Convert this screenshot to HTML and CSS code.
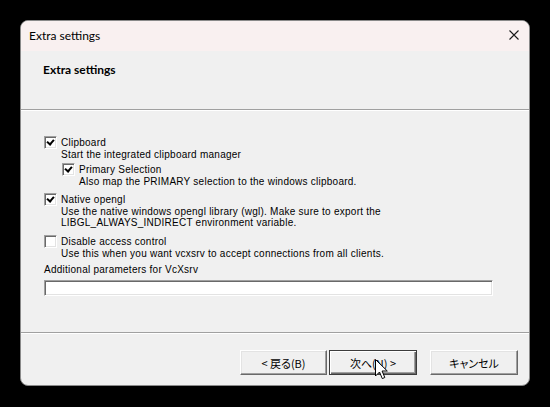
FILE: index.html
```html
<!DOCTYPE html>
<html lang="ja">
<head>
  <meta charset="UTF-8" />
  <title>Extra settings</title>
  <link rel="stylesheet" href="styles.css">
</head>
<body>
  <div class="dialog">
    <div class="titlebar">
      <span class="title">Extra settings</span>
      <svg class="close" width="10" height="10" viewBox="0 0 10 10">
        <path d="M0.5 0.5 L9.5 9.5 M9.5 0.5 L0.5 9.5" stroke="#1a1a1a" stroke-width="1.1" fill="none"/>
      </svg>
    </div>

    <div class="header">
      <h1>Extra settings</h1>
    </div>
    <div class="rule"></div>

    <div class="content">
      <div class="option">
        <label class="check"><span class="box checked"></span>Clipboard</label>
        <p class="desc">Start the integrated clipboard manager</p>
      </div>
      <div class="option sub">
        <label class="check"><span class="box checked"></span>Primary Selection</label>
        <p class="desc">Also map the PRIMARY selection to the windows clipboard.</p>
      </div>
      <div class="option gap">
        <label class="check"><span class="box checked"></span>Native opengl</label>
        <p class="desc">Use the native windows opengl library (wgl). Make sure to export the<br>LIBGL_ALWAYS_INDIRECT environment variable.</p>
      </div>
      <div class="option gap-lg">
        <label class="check"><span class="box"></span>Disable access control</label>
        <p class="desc">Use this when you want vcxsrv to accept connections from all clients.</p>
      </div>
      <p class="field-label">Additional parameters for VcXsrv</p>
      <div class="field"></div>
    </div>

    <div class="rule"></div>
    <div class="buttons">
      <button class="btn">&lt;&nbsp;戻る(B)</button>
      <button class="btn default">次へ(N)&nbsp;&gt;</button>
      <button class="btn cancel">キャンセル</button>
    </div>
  </div>

  <svg class="cursor" width="14" height="22" viewBox="0 0 14 22">
    <path d="M0.5 0.5 L0.5 17 L4.5 13 L7.3 19.6 L9.8 18.5 L7.1 12 L12.3 12 Z" fill="#fff" stroke="#000" stroke-width="1" stroke-linejoin="miter"/>
  </svg>
</body>
</html>
```

FILE: styles.css
```css
* {
  box-sizing: border-box;
  margin: 0;
  padding: 0;
}

body {
  background-color: #000;
  padding: 20px 0 0 20px;
  font-family: 'Liberation Sans', Arial, sans-serif;
  color: #000;
  width: 550px;
  height: 407px;
  overflow: hidden;
}

.dialog {
  width: 510px;
  height: 366px;
  display: flex;
  flex-direction: column;
  background-color: #f0f0f0;
  border: 1px solid #8a8a8a;
  border-radius: 8px;
  overflow: hidden;
}

.titlebar {
  height: 30px;
  display: flex;
  align-items: center;
  justify-content: space-between;
  padding: 0 10px 0 8px;
  background-color: #f9f0f0;
}

.title {
  font-family: Lato, 'Liberation Sans', sans-serif;
  font-size: 12px;
  line-height: 30px;
}

.close {
  margin-top: -2px;
}

.header {
  height: 58px;
  padding: 11px 0 0 22px;
}

.header h1 {
  font-family: Lato, 'Liberation Sans', sans-serif;
  font-size: 12px;
  line-height: 16px;
  font-weight: bold;
}

.rule {
  height: 2px;
  border-top: 1px solid #a0a0a0;
  border-bottom: 1px solid #fff;
}

.content {
  flex: 1;
  padding: 25px 0 0 23px;
  font-size: 10px;
  letter-spacing: 0.25px;
}

.check {
  display: flex;
  align-items: center;
  gap: 4px;
  height: 13px;
  line-height: 11px;
}

.box {
  width: 13px;
  height: 13px;
  flex-shrink: 0;
  background-color: #fff;
  border: 1px solid;
  border-color: #a0a0a0 #fff #fff #a0a0a0;
  box-shadow: inset 1px 1px #696969, inset -1px -1px #e3e3e3;
  position: relative;
}

.box.checked::after {
  content: "";
  position: absolute;
  left: 2px;
  top: 1px;
  width: 3px;
  height: 5px;
  border: solid #000;
  border-width: 0 2px 2px 0;
  transform: translate(1px, 0) rotate(40deg);
}

.desc {
  margin-left: 17px;
  line-height: 11px;
}

.option.sub {
  margin: 3px 0 0 18px;
}

.option.gap {
  margin-top: 6px;
}

.option.gap-lg {
  margin-top: 7px;
}

.field-label {
  margin-top: 5px;
  line-height: 11px;
}

.field {
  margin-top: 5px;
  width: 449px;
  height: 16px;
  background-color: #fff;
  border: 1px solid;
  border-color: #a0a0a0 #fff #fff #a0a0a0;
  box-shadow: inset 1px 1px #696969, inset -1px -1px #e3e3e3;
}

.buttons {
  height: 51px;
  display: flex;
  justify-content: flex-end;
  padding: 16px 11px 0 0;
  gap: 2px;
}

.btn {
  width: 87px;
  height: 25px;
  font-family: 'Noto Sans CJK JP', 'Liberation Sans', sans-serif;
  font-size: 11px;
  font-feature-settings: "palt";
  color: #000;
  background-color: #f0f0f0;
  border: 1px solid;
  border-color: #fff #696969 #696969 #fff;
  box-shadow: inset -1px -1px #a0a0a0, inset 1px 1px #e3e3e3;
}

.btn.default {
  width: 88px;
  border-color: #3c3c3c;
  box-shadow: inset 1px 1px #fff, inset -1px -1px #696969, inset -2px -2px #a0a0a0;
}

.btn.cancel {
  width: 88px;
  margin-left: 11px;
}

.cursor {
  position: absolute;
  left: 375px;
  top: 359px;
}
```
